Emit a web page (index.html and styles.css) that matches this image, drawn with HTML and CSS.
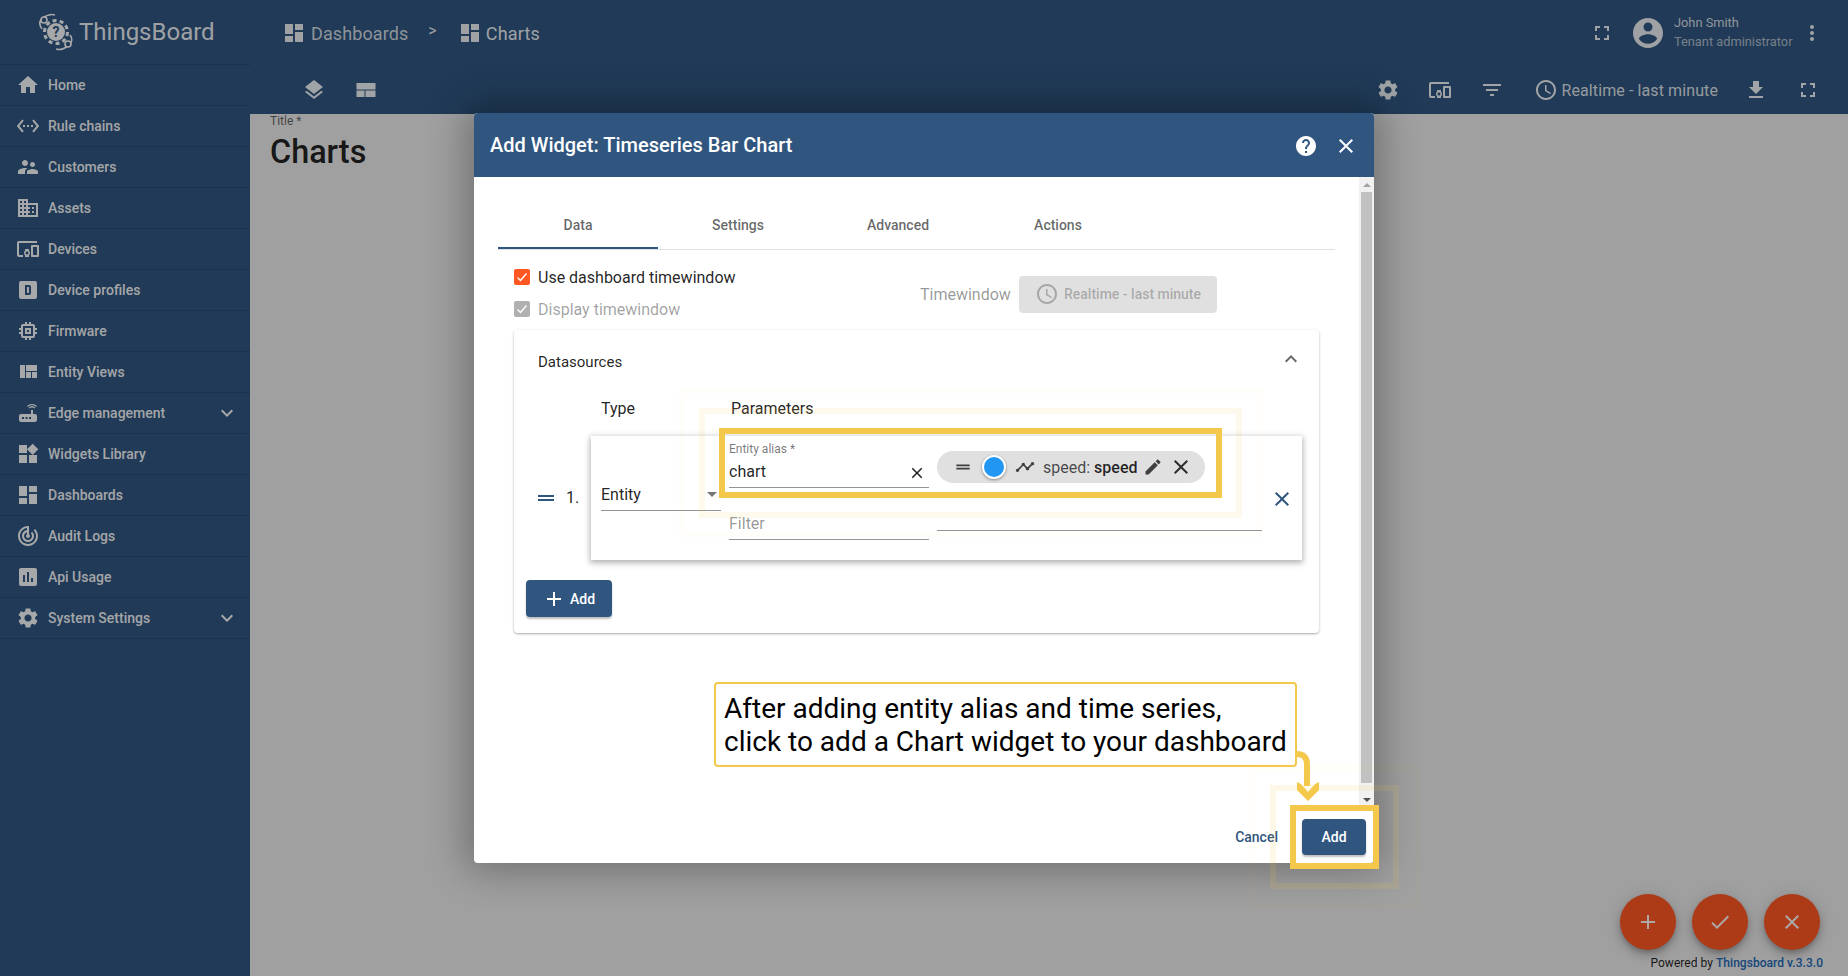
FILE: index.html
```html
<!DOCTYPE html>
<html lang="en">
<head>
<meta charset="utf-8">
<title>ThingsBoard - Charts</title>
<link rel="stylesheet" href="styles.css">
</head>
<body>
<svg class="defs" width="0" height="0" aria-hidden="true">
  <symbol id="i-home" viewBox="0 0 24 24"><path d="M10 20v-6h4v6h5v-8h3L12 3 2 12h3v8z"/></symbol>
  <symbol id="i-rule" viewBox="0 0 24 24"><path d="M7.77 6.76L6.23 5.48.82 12l5.41 6.52 1.54-1.28L3.42 12l4.35-5.24zM7 13h2v-2H7v2zm10-2h-2v2h2v-2zm-6 2h2v-2h-2v2zm6.77-7.52l-1.54 1.28L20.58 12l-4.35 5.24 1.54 1.28L23.18 12l-5.41-6.52z"/></symbol>
  <symbol id="i-cust" viewBox="0 0 24 24"><path d="M16.5 12c1.38 0 2.49-1.12 2.49-2.5S17.88 7 16.5 7C15.12 7 14 8.12 14 9.5s1.12 2.5 2.5 2.5zM9 11c1.66 0 2.99-1.34 2.99-3S10.66 5 9 5C7.34 5 6 6.34 6 8s1.34 3 3 3zm7.5 3c-1.83 0-5.5.92-5.5 2.75V19h11v-2.25c0-1.83-3.67-2.75-5.5-2.75zM9 13c-2.33 0-7 1.17-7 3.5V19h7v-2.25c0-.85.33-2.34 2.37-3.47C10.5 13.1 9.66 13 9 13z"/></symbol>
  <symbol id="i-domain" viewBox="0 0 24 24"><path d="M12 7V3H2v18h20V7H12zM6 19H4v-2h2v2zm0-4H4v-2h2v2zm0-4H4V9h2v2zm0-4H4V5h2v2zm4 12H8v-2h2v2zm0-4H8v-2h2v2zm0-4H8V9h2v2zm0-4H8V5h2v2zm10 12h-8v-2h2v-2h-2v-2h2v-2h-2V9h8v10zm-2-8h-2v2h2v-2zm0 4h-2v2h2v-2z"/></symbol>
  <symbol id="i-devices" viewBox="0 0 24 24"><path d="M3 6h18V4H3c-1.1 0-2 .9-2 2v12c0 1.1.9 2 2 2h4v-2H3V6zm10 6H9v1.78c-.61.55-1 1.33-1 2.22s.39 1.67 1 2.22V20h4v-1.78c.61-.55 1-1.34 1-2.22s-.39-1.67-1-2.22V12zm-2 5.5c-.83 0-1.5-.67-1.5-1.5s.67-1.5 1.5-1.5 1.5.67 1.5 1.5-.67 1.5-1.5 1.5zM22 8h-6c-.5 0-1 .5-1 1v10c0 .5.5 1 1 1h6c.5 0 1-.5 1-1V9c0-.5-.5-1-1-1zm-1 10h-4v-8h4v8z"/></symbol>
  <symbol id="i-dbox" viewBox="0 0 24 24"><path fill-rule="evenodd" d="M5 3h14a2 2 0 0 1 2 2v14a2 2 0 0 1-2 2H5a2 2 0 0 1-2-2V5a2 2 0 0 1 2-2zm4 4v10h4a2 2 0 0 0 2-2V9a2 2 0 0 0-2-2H9zm2 2h2v6h-2V9z"/></symbol>
  <symbol id="i-memory" viewBox="0 0 24 24"><path d="M15 9H9v6h6V9zm-2 4h-2v-2h2v2zm8-2V9h-2V7c0-1.1-.9-2-2-2h-2V3h-2v2h-2V3H9v2H7c-1.1 0-2 .9-2 2v2H3v2h2v2H3v2h2v2c0 1.1.9 2 2 2h2v2h2v-2h2v2h2v-2h2c1.1 0 2-.9 2-2v-2h2v-2h-2v-2h2zm-4 6H7V7h10v10z"/></symbol>
  <symbol id="i-quilt" viewBox="0 0 24 24"><path d="M10 18h5v-6h-5v6zm-6 0h5V5H4v13zm12 0h5v-6h-5v6zM10 5v6h11V5H10z"/></symbol>
  <symbol id="i-router" viewBox="0 0 24 24"><path d="M20.2 5.9l.8-.8C19.6 3.7 17.8 3 16 3s-3.6.7-5 2.1l.8.8C13 4.8 14.5 4.2 16 4.2s3 .6 4.2 1.7zm-.9.8c-.9-.9-2.1-1.4-3.3-1.4s-2.4.5-3.3 1.4l.8.8c.7-.7 1.6-1 2.5-1 .9 0 1.8.3 2.5 1l.8-.8zM19 13h-2V9h-2v4H5c-1.1 0-2 .9-2 2v4c0 1.1.9 2 2 2h14c1.1 0 2-.9 2-2v-4c0-1.1-.9-2-2-2zM8 18H6v-2h2v2zm3.5 0h-2v-2h2v2zm3.5 0h-2v-2h2v2z"/></symbol>
  <symbol id="i-widgets" viewBox="0 0 24 24"><path d="M13 13v8h8v-8h-8zM3 21h8v-8H3v8zM3 3v8h8V3H3zm13.66-1.31L11 7.34 16.66 13l5.66-5.66-5.66-5.65z"/></symbol>
  <symbol id="i-dash" viewBox="0 0 24 24"><path d="M3 13h8V3H3v10zm0 8h8v-6H3v6zm10 0h8V11h-8v10zm0-18v6h8V3h-8z"/></symbol>
  <symbol id="i-track" viewBox="0 0 24 24"><path d="M19.07 4.93l-1.41 1.41C19.1 7.79 20 9.79 20 12c0 4.42-3.58 8-8 8s-8-3.58-8-8c0-4.08 3.05-7.44 7-7.93v2.02C8.16 6.57 6 9.03 6 12c0 3.31 2.69 6 6 6s6-2.69 6-6c0-1.66-.67-3.16-1.76-4.24l-1.41 1.41C15.55 9.9 16 10.9 16 12c0 2.21-1.79 4-4 4s-4-1.79-4-4c0-1.86 1.28-3.41 3-3.86v2.14c-.6.35-1 .98-1 1.72 0 1.1.9 2 2 2s2-.9 2-2c0-.74-.4-1.38-1-1.72V2h-1C6.48 2 2 6.48 2 12s4.48 10 10 10 10-4.48 10-10c0-2.76-1.12-5.26-2.93-7.07z"/></symbol>
  <symbol id="i-chart" viewBox="0 0 24 24"><path d="M19 3H5c-1.1 0-2 .9-2 2v14c0 1.1.9 2 2 2h14c1.1 0 2-.9 2-2V5c0-1.1-.9-2-2-2zM9 17H7v-7h2v7zm4 0h-2V7h2v10zm4 0h-2v-4h2v4z"/></symbol>
  <symbol id="i-gear" viewBox="0 0 24 24"><path d="M19.14 12.94c.04-.3.06-.61.06-.94 0-.32-.02-.64-.07-.94l2.03-1.58c.18-.14.23-.41.12-.61l-1.92-3.32c-.12-.22-.37-.29-.59-.22l-2.39.96c-.5-.38-1.03-.7-1.62-.94l-.36-2.54c-.04-.24-.24-.41-.48-.41h-3.84c-.24 0-.43.17-.47.41l-.36 2.54c-.59.24-1.13.57-1.62.94l-2.39-.96c-.22-.08-.47 0-.59.22L2.74 8.87c-.12.21-.08.47.12.61l2.03 1.58c-.05.3-.09.63-.09.94s.02.64.07.94l-2.03 1.58c-.18.14-.23.41-.12.61l1.92 3.32c.12.22.37.29.59.22l2.39-.96c.5.38 1.03.7 1.62.94l.36 2.54c.05.24.24.41.48.41h3.84c.24 0 .44-.17.47-.41l.36-2.54c.59-.24 1.13-.56 1.62-.94l2.39.96c.22.08.47 0 .59-.22l1.92-3.32c.12-.22.07-.47-.12-.61l-2.01-1.58zM12 15.6c-1.98 0-3.6-1.62-3.6-3.6s1.62-3.6 3.6-3.6 3.6 1.62 3.6 3.6-1.62 3.6-3.6 3.6z"/></symbol>
  <symbol id="i-more" viewBox="0 0 24 24"><path d="M16.59 8.59L12 13.17 7.41 8.59 6 10l6 6 6-6z"/></symbol>
  <symbol id="i-less" viewBox="0 0 24 24"><path d="M12 8l-6 6 1.41 1.41L12 10.83l4.59 4.58L18 14z"/></symbol>
  <symbol id="i-full" viewBox="0 0 24 24"><path d="M7 14H5v5h5v-2H7v-3zm-2-4h2V7h3V5H5v5zm12 7h-3v2h5v-5h-2v3zM14 5v2h3v3h2V5h-5z"/></symbol>
  <symbol id="i-account" viewBox="0 0 24 24"><path d="M12 2C6.48 2 2 6.48 2 12s4.48 10 10 10 10-4.48 10-10S17.52 2 12 2zm0 3c1.66 0 3 1.34 3 3s-1.34 3-3 3-3-1.34-3-3 1.34-3 3-3zm0 14.2c-2.5 0-4.71-1.28-6-3.22.03-1.99 4-3.08 6-3.08 1.99 0 5.97 1.09 6 3.08-1.29 1.94-3.5 3.22-6 3.22z"/></symbol>
  <symbol id="i-vert" viewBox="0 0 24 24"><path d="M12 8c1.1 0 2-.9 2-2s-.9-2-2-2-2 .9-2 2 .9 2 2 2zm0 2c-1.1 0-2 .9-2 2s.9 2 2 2 2-.9 2-2-.9-2-2-2zm0 6c-1.1 0-2 .9-2 2s.9 2 2 2 2-.9 2-2-.9-2-2-2z"/></symbol>
  <symbol id="i-layers" viewBox="0 0 24 24"><path d="M11.99 18.54l-7.37-5.73L3 14.07l9 7 9-7-1.63-1.27-7.38 5.74zM12 16l7.36-5.73L21 9l-9-7-9 7 1.63 1.27L12 16z"/></symbol>
  <symbol id="i-table" viewBox="0 0 24 24"><path d="M2.5 5h19v6.5h-19zM2.5 12.5h8V19h-8zM11.5 12.5h10V19h-10z"/></symbol>
  <symbol id="i-filter" viewBox="0 0 24 24"><path d="M10 18h4v-2h-4v2zM3 6v2h18V6H3zm3 7h12v-2H6v2z"/></symbol>
  <symbol id="i-clock" viewBox="0 0 24 24"><path d="M11.99 2C6.47 2 2 6.48 2 12s4.47 10 9.99 10C17.52 22 22 17.52 22 12S17.52 2 11.99 2zM12 20c-4.42 0-8-3.58-8-8s3.58-8 8-8 8 3.58 8 8-3.58 8-8 8zm.5-13H11v6l5.25 3.15.75-1.23-4.5-2.67z"/></symbol>
  <symbol id="i-down" viewBox="0 0 24 24"><path d="M19 9h-4V3H9v6H5l7 7 7-7zM5 18v2h14v-2H5z"/></symbol>
  <symbol id="i-help" viewBox="0 0 24 24"><path d="M12 2C6.48 2 2 6.48 2 12s4.48 10 10 10 10-4.48 10-10S17.52 2 12 2zm1 17h-2v-2h2v2zm2.07-7.75l-.9.92C13.45 12.9 13 13.5 13 15h-2v-.5c0-1.1.45-2.1 1.17-2.83l1.24-1.26c.37-.36.59-.86.59-1.41 0-1.1-.9-2-2-2s-2 .9-2 2H8c0-2.21 1.79-4 4-4s4 1.79 4 4c0 .88-.36 1.68-.93 2.25z"/></symbol>
  <symbol id="i-close" viewBox="0 0 24 24"><path d="M19 6.41L17.59 5 12 10.59 6.41 5 5 6.41 10.59 12 5 17.59 6.41 19 12 13.41 17.59 19 19 17.59 13.41 12z"/></symbol>
  <symbol id="i-drag" viewBox="0 0 24 24"><path d="M20 9H4v2h16V9zM4 15h16v-2H4v2z"/></symbol>
  <symbol id="i-line" viewBox="0 0 24 24"><path d="M23 8c0 1.1-.9 2-2 2-.18 0-.35-.02-.51-.07l-3.56 3.55c.05.16.07.34.07.52 0 1.1-.9 2-2 2s-2-.9-2-2c0-.18.02-.36.07-.52l-2.55-2.55c-.16.05-.34.07-.52.07s-.36-.02-.52-.07l-4.55 4.56c.05.16.07.33.07.51 0 1.1-.9 2-2 2s-2-.9-2-2 .9-2 2-2c.18 0 .35.02.51.07l4.56-4.55C8.02 9.36 8 9.18 8 9c0-1.1.9-2 2-2s2 .9 2 2c0 .18-.02.36-.07.52l2.55 2.55c.16-.05.34-.07.52-.07s.36.02.52.07l3.55-3.56C19.02 8.35 19 8.18 19 8c0-1.1.9-2 2-2s2 .9 2 2z"/></symbol>
  <symbol id="i-edit" viewBox="0 0 24 24"><path d="M3 17.25V21h3.75L17.81 9.94l-3.75-3.75L3 17.25zM20.71 7.04c.39-.39.39-1.02 0-1.41l-2.34-2.34c-.39-.39-1.02-.39-1.41 0l-1.83 1.83 3.75 3.75 1.83-1.83z"/></symbol>
  <symbol id="i-add" viewBox="0 0 24 24"><path d="M19 13h-6v6h-2v-6H5v-2h6V5h2v6h6v2z"/></symbol>
  <symbol id="i-done" viewBox="0 0 24 24"><path d="M9 16.2L4.8 12l-1.4 1.4L9 19 21 7l-1.4-1.4L9 16.2z"/></symbol>
</svg>

<div class="app">
  <aside class="sidebar">
    <div class="logo">
      <svg class="logo-mark" viewBox="0 0 40 40" width="40" height="40">
        <circle class="logo-gear" cx="20" cy="20" r="9"/>
        <circle class="logo-teeth" cx="20" cy="20" r="11.5"/>
        <text class="logo-q" x="20" y="25">?</text>
        <path class="logo-orbit" d="M6 17C3 13 3 9 7 6M7 6c4-3 9-4 12-3M34 23c3 4 2 8-2 11M32 34c-4 3-9 4-12 3"/>
        <circle class="logo-node" cx="8" cy="8" r="3"/>
        <circle class="logo-node" cx="32" cy="32" r="3"/>
      </svg>
      <span class="logo-text">ThingsBoard</span>
    </div>
    <nav class="menu">
      <a class="menu-item"><svg class="icon"><use href="#i-home"/></svg><span>Home</span></a>
      <a class="menu-item"><svg class="icon"><use href="#i-rule"/></svg><span>Rule chains</span></a>
      <a class="menu-item"><svg class="icon"><use href="#i-cust"/></svg><span>Customers</span></a>
      <a class="menu-item"><svg class="icon"><use href="#i-domain"/></svg><span>Assets</span></a>
      <a class="menu-item"><svg class="icon"><use href="#i-devices"/></svg><span>Devices</span></a>
      <a class="menu-item"><svg class="icon"><use href="#i-dbox"/></svg><span>Device profiles</span></a>
      <a class="menu-item"><svg class="icon"><use href="#i-memory"/></svg><span>Firmware</span></a>
      <a class="menu-item"><svg class="icon"><use href="#i-quilt"/></svg><span>Entity Views</span></a>
      <a class="menu-item"><svg class="icon"><use href="#i-router"/></svg><span>Edge management</span><svg class="icon chevron"><use href="#i-more"/></svg></a>
      <a class="menu-item"><svg class="icon"><use href="#i-widgets"/></svg><span>Widgets Library</span></a>
      <a class="menu-item"><svg class="icon"><use href="#i-dash"/></svg><span>Dashboards</span></a>
      <a class="menu-item"><svg class="icon"><use href="#i-track"/></svg><span>Audit Logs</span></a>
      <a class="menu-item"><svg class="icon"><use href="#i-chart"/></svg><span>Api Usage</span></a>
      <a class="menu-item"><svg class="icon"><use href="#i-gear"/></svg><span>System Settings</span><svg class="icon chevron"><use href="#i-more"/></svg></a>
    </nav>
  </aside>

  <main class="main">
    <header class="topbar">
      <div class="crumbs">
        <svg class="icon"><use href="#i-dash"/></svg><span class="crumb-dim">Dashboards</span>
        <span class="crumb-sep">&gt;</span>
        <svg class="icon crumb-icon"><use href="#i-dash"/></svg><span class="crumb-on">Charts</span>
      </div>
      <div class="user">
        <svg class="icon"><use href="#i-full"/></svg>
        <svg class="icon avatar"><use href="#i-account"/></svg>
        <div class="user-info"><span>John Smith</span><span>Tenant administrator</span></div>
        <svg class="icon"><use href="#i-vert"/></svg>
      </div>
    </header>
    <div class="toolbar">
      <div class="tools-left">
        <svg class="icon"><use href="#i-layers"/></svg>
        <svg class="icon"><use href="#i-table"/></svg>
      </div>
      <div class="tools-right">
        <svg class="icon"><use href="#i-gear"/></svg>
        <svg class="icon"><use href="#i-devices"/></svg>
        <svg class="icon"><use href="#i-filter"/></svg>
        <div class="timewin"><svg class="icon"><use href="#i-clock"/></svg><span>Realtime - last minute</span></div>
        <svg class="icon"><use href="#i-down"/></svg>
        <svg class="icon"><use href="#i-full"/></svg>
      </div>
    </div>
    <section class="content">
      <div class="title-label">Title *</div>
      <h1 class="title">Charts</h1>
    </section>
    <div class="fabs">
      <button class="fab"><svg class="icon"><use href="#i-add"/></svg></button>
      <button class="fab"><svg class="icon"><use href="#i-done"/></svg></button>
      <button class="fab"><svg class="icon"><use href="#i-close"/></svg></button>
    </div>
    <div class="powered">Powered by <b>Thingsboard v.3.3.0</b></div>
  </main>
</div>

<div class="backdrop"></div>

<div class="dialog">
  <div class="dialog-head">
    <h2>Add Widget: Timeseries Bar Chart</h2>
    <div class="dialog-actions">
      <svg class="icon"><use href="#i-help"/></svg>
      <svg class="icon"><use href="#i-close"/></svg>
    </div>
  </div>
  <div class="dialog-body">
    <div class="dialog-scroll">
      <div class="tabs">
        <div class="tab active">Data</div>
        <div class="tab">Settings</div>
        <div class="tab">Advanced</div>
        <div class="tab">Actions</div>
      </div>
      <div class="options">
        <div class="checks">
          <label class="check"><span class="box on"><svg viewBox="0 0 16 16"><path d="M3.5 8.5l3 3 6-7"/></svg></span>Use dashboard timewindow</label>
          <label class="check off"><span class="box"><svg viewBox="0 0 16 16"><path d="M3.5 8.5l3 3 6-7"/></svg></span>Display timewindow</label>
        </div>
        <div class="tw-group">
          <span class="tw-label">Timewindow</span>
          <div class="tw-btn"><svg class="icon"><use href="#i-clock"/></svg><span>Realtime - last minute</span></div>
        </div>
      </div>
      <div class="card">
        <div class="card-head"><span>Datasources</span><svg class="icon"><use href="#i-less"/></svg></div>
        <div class="col-heads"><span class="h-type">Type</span><span>Parameters</span></div>
        <div class="ds-row">
          <div class="ds-left"><svg class="icon"><use href="#i-drag"/></svg><span>1.</span></div>
          <div class="ds-card">
            <div class="select"><span>Entity</span><i class="caret"></i></div>
            <div class="params">
              <div class="alias">
                <div class="alias-label">Entity alias *</div>
                <div class="alias-value"><span>chart</span><svg class="icon tiny"><use href="#i-close"/></svg></div>
              </div>
              <div class="filter">Filter</div>
            </div>
            <div class="keys">
              <div class="chip">
                <svg class="icon chip-drag"><use href="#i-drag"/></svg>
                <span class="dot"></span>
                <svg class="icon chip-line"><use href="#i-line"/></svg>
                <span class="chip-text">speed: <b>speed</b></span>
                <svg class="icon chip-edit"><use href="#i-edit"/></svg>
                <svg class="icon chip-close"><use href="#i-close"/></svg>
              </div>
            </div>
            <svg class="icon ds-close"><use href="#i-close"/></svg>
          </div>
        </div>
        <button class="btn-add"><svg class="icon"><use href="#i-add"/></svg>Add</button>
      </div>
    </div>
    <div class="scrollbar"><i class="arrow-up"></i><div class="thumb"></div><i class="arrow-down"></i></div>
  </div>
  <div class="dialog-foot">
    <button class="btn-text">Cancel</button>
    <button class="btn-primary">Add</button>
  </div>
</div>

<div class="ring r1a"></div>
<div class="ring r1b"></div>
<div class="ring r1c"></div>
<div class="ring r2a"></div>
<div class="ring r2b"></div>
<div class="ring r2c"></div>
<div class="callout">After adding entity alias and time series,<br>click to add a Chart widget to your dashboard</div>
<svg class="pointer" viewBox="0 0 30 56" width="30" height="56">
  <path d="M2 3c6 0 10 3 10 10v22" fill="none" stroke="#f4c84a" stroke-width="6"/>
  <path d="M2 31l4 2 7 8 7-8 4-2v8l-11 11-11-11z" fill="#f4c84a"/>
</svg>
</body>
</html>
```
FILE: styles.css
```css
* { box-sizing: border-box; }
html, body { margin: 0; height: 100%; }
body {
  position: relative;
  width: 1848px;
  height: 976px;
  overflow: hidden;
  font-family: Roboto, "Noto Sans", sans-serif;
  color: rgba(0, 0, 0, .87);
  background: #ececec;
}
.defs { position: absolute; }
.icon { width: 24px; height: 24px; fill: currentColor; flex: none; display: block; }

.app { display: flex; height: 976px; }

/* sidebar */
.sidebar { width: 250px; flex: none; background: #305680; color: rgba(255, 255, 255, .96); }
.logo { height: 64px; display: flex; align-items: center; padding: 0 0 0 36px; gap: 3px; }
.logo-mark { flex: none; }
.logo-gear { fill: currentColor; }
.logo-teeth { fill: none; stroke: currentColor; stroke-width: 3; stroke-dasharray: 4 3.2; }
.logo-q { fill: #305680; font: 700 14px Roboto, sans-serif; text-anchor: middle; }
.logo-orbit { fill: none; stroke: currentColor; stroke-width: 1.6; }
.logo-node { fill: #305680; stroke: currentColor; stroke-width: 1.6; }
.logo-text { font-size: 24px; color: rgba(255, 255, 255, .92); }
.menu { border-top: 1px solid rgba(0, 0, 0, .12); }
.menu-item {
  display: flex; align-items: center; height: 41px;
  padding: 0 16px; gap: 8px;
  font-size: 14px; font-weight: 500;
  border-bottom: 1px solid rgba(0, 0, 0, .12);
}
.menu-item span { flex: 1; }
.menu-item .chevron { margin-right: -5px; }

/* header */
.main { position: relative; flex: 1; display: flex; flex-direction: column; min-width: 0; }
.topbar {
  height: 64px; background: #305680; color: rgba(255, 255, 255, .9);
  display: flex; justify-content: space-between; align-items: center;
  padding: 2px 24px 0 32px;
}
.crumbs { display: flex; align-items: center; font-size: 18px; }
.crumb-dim { margin-left: 5px; color: rgba(255, 255, 255, .78); letter-spacing: .1px; }
.crumb-sep { margin: -6px 21px 0 20px; font-size: 16px; }
.crumb-icon { margin-right: 4px; }
.crumb-on { color: rgba(255, 255, 255, .92); letter-spacing: .2px; }
.user { display: flex; align-items: center; }
.avatar { width: 36px; height: 36px; margin-left: 16px; }
.user-info { display: flex; flex-direction: column; gap: 4px; margin: -2px 8px 0 8px; font-size: 12.8px; line-height: 15px; color: rgba(255, 255, 255, .62); width: 118px; white-space: nowrap; }
.user-info span:first-child { color: rgba(255, 255, 255, .8); }
.toolbar {
  height: 50px; background: #305680; color: rgba(255, 255, 255, .92);
  display: flex; justify-content: space-between; align-items: center;
  padding: 2px 28px 0 52px;
}
.tools-left { display: flex; gap: 28px; }
.tools-right { display: flex; align-items: center; gap: 28px; }
.timewin { display: flex; align-items: center; gap: 4px; font-size: 16px; margin: 0 -2px 0 2px; }
.timewin span { color: rgba(255, 255, 255, .85); letter-spacing: .1px; }

/* content */
.content { flex: 1; padding: 0 20px; background: #ececec; position: relative; }
.title-label { font-size: 12px; line-height: 14px; color: rgba(0, 0, 0, .6); }
.title { margin: 5px 0 0; font-size: 32.4px; line-height: 38px; font-weight: 500; color: rgba(0, 0, 0, .87); }
.fabs { position: absolute; right: 28px; bottom: 26px; display: flex; gap: 16px; }
.fab {
  width: 56px; height: 56px; border: 0; border-radius: 50%; padding: 0;
  background: #ff5722; color: rgba(255, 255, 255, .95);
  display: flex; align-items: center; justify-content: center;
  box-shadow: 0 3px 5px -1px rgba(0,0,0,.2), 0 6px 10px 0 rgba(0,0,0,.14), 0 1px 18px 0 rgba(0,0,0,.12);
}
.powered { position: absolute; right: 25px; bottom: 6px; font-size: 12px; line-height: 14px; letter-spacing: .04px; color: rgba(0, 0, 0, .87); }
.powered b { font-weight: 500; color: #2468b4; }

.backdrop { position: absolute; inset: 0; background: rgba(0, 0, 0, .32); }

/* dialog */
.dialog {
  position: absolute; left: 474px; top: 113px; width: 900px; height: 750px;
  background: #fff; border-radius: 4px; display: flex; flex-direction: column; overflow: hidden;
  box-shadow: 0 0 38px 8px rgba(0,0,0,.3);
}
.dialog-head {
  height: 64px; flex: none; background: #305680; color: #fff;
  display: flex; justify-content: space-between; align-items: center; padding: 0 8px 0 16px;
}
.dialog-head h2 { margin: 0; font-size: 20px; line-height: 24px; font-weight: 500; }
.dialog-actions { display: flex; gap: 16px; padding-right: 8px; margin-top: 2px; }
.dialog-body { flex: 1; display: flex; min-height: 0; }
.dialog-scroll { flex: 1; padding: 24px 24px 0 24px; min-width: 0; }
.scrollbar { width: 15px; flex: none; background: #f1f1f1; display: flex; flex-direction: column; align-items: center; position: relative; }
.arrow-up { margin-top: 6px; border: 4px solid transparent; border-top: 0; border-bottom: 4px solid #a3a3a3; }
.arrow-down { margin-top: 15px; border: 4px solid transparent; border-bottom: 0; border-top: 4px solid #505050; }
.thumb { width: 11px; margin-top: 5px; height: 591px; background: #c1c1c1; }
.dialog-foot { height: 53px; flex: none; display: flex; justify-content: flex-end; align-items: flex-start; gap: 8px; padding: 9px 8px 0 0; }
.btn-text, .btn-primary { height: 36px; border: 0; border-radius: 4px; font: 500 14px Roboto, sans-serif; padding: 0 16px; }
.btn-text { background: transparent; color: #305680; }
.btn-primary { width: 64px; padding: 0; background: #305680; color: #fff; box-shadow: 0 2px 2px rgba(0,0,0,.25); }

.tabs { display: flex; height: 49px; border-bottom: 1px solid #e0e0e0; }
.tab { width: 160px; display: flex; align-items: center; justify-content: center; font-size: 14px; font-weight: 500; color: rgba(0, 0, 0, .6); }
.tab.active { box-shadow: inset 0 -2px 0 #305680; }

.options { display: flex; padding: 11px 0 0 16px; height: 80px; }
.checks { width: 406px; }
.check { display: flex; align-items: center; height: 32px; font-size: 16px; gap: 8px; }
.check.off { color: rgba(0, 0, 0, .38); }
.box { width: 16px; height: 16px; border-radius: 2px; background: #b0b0b0; display: block; }
.box.on { background: #ff5722; }
.box svg { display: block; fill: none; stroke: #fff; stroke-width: 1.4; }
.tw-group { display: flex; align-items: center; gap: 8px; height: 64px; margin-top: 1px; }
.tw-label { font-size: 16px; color: rgba(0, 0, 0, .42); width: 91px; white-space: nowrap; }
.tw-btn { width: 198px; height: 37px; border-radius: 4px; background: #e0e0e0; color: rgba(0, 0, 0, .26); display: flex; align-items: center; gap: 5px; padding-left: 16px; font-size: 14px; font-weight: 500; }

.card { margin-left: 16px; width: 805px; height: 303px; border-radius: 4px; background: #fff; box-shadow: 0 1px 3px 0 rgba(0,0,0,.28), 0 1px 1px 0 rgba(0,0,0,.08); padding-left: 12px; }
.card-head { height: 62px; display: flex; justify-content: space-between; align-items: center; padding: 2px 16px 0 12px; font-size: 15px; }
.card-head .icon { margin-top: -6px; color: rgba(0, 0, 0, .6); }
.col-heads { display: flex; height: 32px; align-items: center; margin-bottom: 12px; font-size: 16px; padding-left: 75px; }
.h-type { width: 130px; }
.ds-row { display: flex; align-items: stretch; }
.ds-left { width: 65px; display: flex; align-items: center; gap: 8px; padding: 0 0 1px 8px; font-size: 16px; }
.ds-left .icon { color: #305680; }
.ds-card {
  width: 711px; height: 124px; flex: none; padding-left: 10px;
  display: flex; align-items: flex-start; gap: 8px; background: #fff;
  box-shadow: 0 2px 6px 1px rgba(0,0,0,.3);
}
.select { width: 120px; margin-top: 47px; height: 28px; display: flex; align-items: center; justify-content: space-between; font-size: 16px; border-bottom: 1px solid #949494; padding: 0 4px 5px 0; }
.caret { border: 5px solid transparent; border-bottom: 0; border-top: 5px solid #757575; }
.params { width: 200px; }
.alias { height: 52px; padding-top: 5px; border-bottom: 1px solid #949494; }
.alias-label { font-size: 12px; line-height: 16px; color: rgba(0, 0, 0, .54); }
.alias-value { display: flex; justify-content: space-between; align-items: center; font-size: 16px; line-height: 22px; margin-top: 4px; }
.tiny { width: 18px; height: 18px; margin-right: 3px; margin-top: 2px; }
.filter { margin-top: 25px; font-size: 16px; line-height: 22px; padding-bottom: 4px; color: rgba(0, 0, 0, .42); border-bottom: 1px solid #949494; }
.keys { width: 325px; height: 95px; padding-top: 15px; border-bottom: 1px solid #949494; }
.chip { width: 268px; height: 32px; border-radius: 16px; background: #e0e0e0; display: flex; align-items: center; padding-left: 16px; color: rgba(0, 0, 0, .87); }
.chip .icon { color: rgba(0, 0, 0, .72); }
.chip-drag { width: 20px; height: 20px; }
.dot { width: 24px; height: 24px; margin-left: 9px; border-radius: 50%; background: #2196f3; border: 2px solid #fff; box-shadow: 0 1px 3px rgba(0,0,0,.4); flex: none; }
.chip-line { width: 20px; height: 20px; margin-left: 9px; }
.chip-text { font-size: 16px; margin-left: 8px; white-space: nowrap; color: rgba(0, 0, 0, .7); }
.chip-text b { font-weight: 500; color: rgba(0, 0, 0, .85); }
.chip-edit { width: 20px; height: 20px; margin-left: 6px; }
.chip .chip-close { margin-left: 6px; color: rgba(0,0,0,.8); }
.ds-close { margin-top: 51px; color: #305680; }
.btn-add {
  margin-top: 20px; width: 86px; height: 37px; border: 0; border-radius: 4px; background: #305680; color: #fff;
  display: flex; align-items: center; gap: 4px; padding: 0 0 0 16px; font: 500 14px Roboto, sans-serif;
  box-shadow: 0 2px 2px rgba(0,0,0,.25);
}

/* guide highlights */
.ring { position: absolute; border: 6px solid #f4c84a; }
.r1a { left: 719px; top: 428px; width: 503px; height: 70px; }
.r1b { left: 699px; top: 408px; width: 543px; height: 110px; opacity: .1; }
.r1c { left: 678px; top: 388px; width: 586px; height: 150px; opacity: .02; }
.r2a { left: 1290px; top: 805px; width: 89px; height: 64px; }
.r2b { left: 1270px; top: 785px; width: 129px; height: 104px; opacity: .12; }
.r2c { left: 1250px; top: 765px; width: 170px; height: 144px; opacity: .02; }
.callout {
  position: absolute; left: 714px; top: 682px; width: 583px; height: 85px;
  background: #fff; border: 2px solid #f4c84a; border-radius: 4px;
  font-size: 28px; line-height: 33px; padding: 8px 0 0 8px; color: #000; white-space: nowrap;
}
.pointer { position: absolute; left: 1295px; top: 751px; }
```
